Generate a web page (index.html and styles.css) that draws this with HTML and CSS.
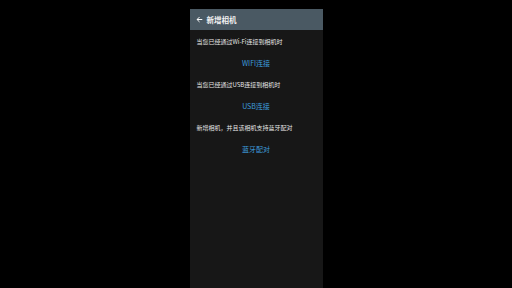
FILE: index.html
```html
<!DOCTYPE html>
<html lang="zh-CN">
<head>
<meta charset="utf-8">
<title>新增相机</title>
<link rel="stylesheet" href="styles.css">
</head>
<body>
<div class="phone">
  <div class="header">
    <svg class="back" viewBox="0 0 10 10" width="7" height="7"><path d="M9 5H1.5M5 1.5L1.5 5L5 8.5" fill="none" stroke="#fff" stroke-width="1.4"/></svg>
    <span class="title">新增相机</span>
  </div>
  <div class="content">
    <div class="desc">当您已经通过Wi-Fi连接到相机时</div>
    <div class="link">WIFI连接</div>
    <div class="desc">当您已经通过USB连接到相机时</div>
    <div class="link">USB连接</div>
    <div class="desc">新增相机，并且该相机支持蓝牙配对</div>
    <div class="link">蓝牙配对</div>
  </div>
</div>
</body>
</html>
```
FILE: styles.css
```css
html, body {
  margin: 0;
  padding: 0;
  background: #000;
  height: 100%;
}
body {
  display: flex;
  justify-content: center;
  font-family: "Noto Sans CJK SC", "Noto Sans", sans-serif;
}
.phone {
  width: 133px;
  height: 288px;
  margin-top: 9px;
  background: #171717;
  display: flex;
  flex-direction: column;
}
.header {
  height: 21px;
  background: #4a5963;
  display: flex;
  align-items: center;
  padding-left: 6px;
  gap: 4px;
}
.back {
  display: block;
}
.title {
  color: #f2f2f2;
  font-size: 7.5px;
  font-weight: bold;
  line-height: 1;
}
.content {
  display: flex;
  flex-direction: column;
  padding-top: 6px;
}
.desc {
  color: #e6e6e6;
  font-size: 6px;
  line-height: 10px;
  padding-left: 7px;
  margin-top: 1px;
}
.link {
  color: #3d9bdc;
  font-size: 7px;
  line-height: 10px;
  text-align: center;
  margin-top: 11px;
  margin-bottom: 11px;
}
```
